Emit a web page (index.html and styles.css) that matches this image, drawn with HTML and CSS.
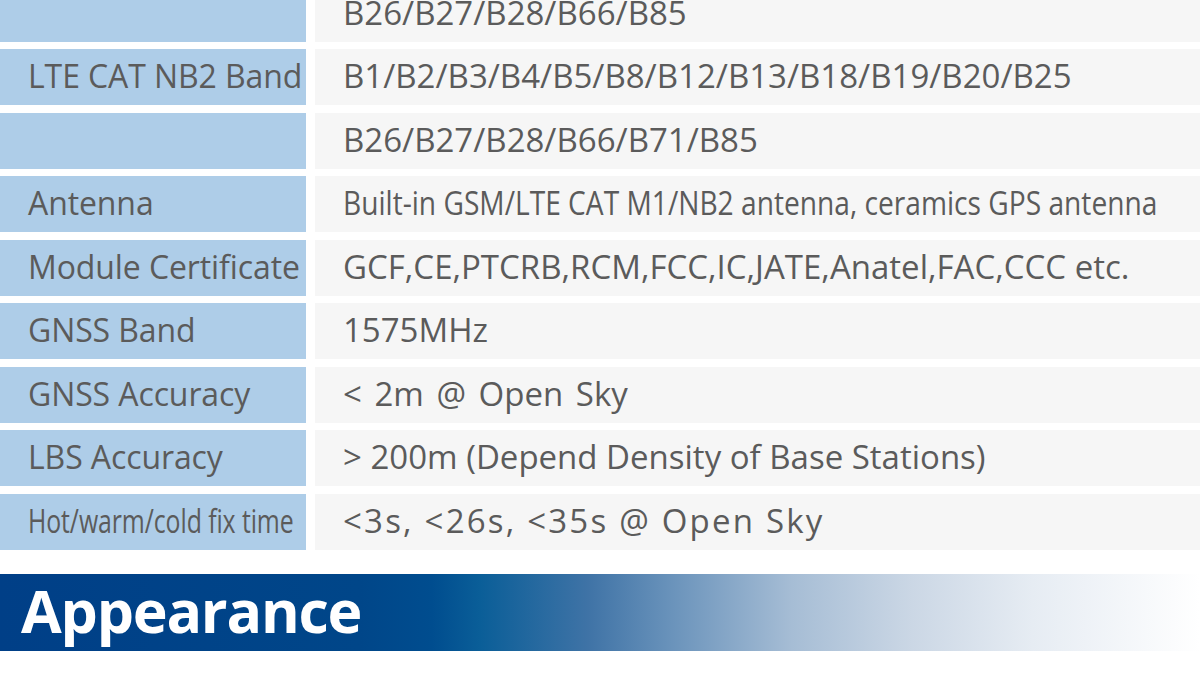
FILE: index.html
```html
<!DOCTYPE html>
<html lang="en">
<head>
<meta charset="utf-8">
<title>Specifications</title>
<link rel="stylesheet" href="styles.css">
</head>
<body>
<div class="page">
  <div class="spec">
    <div class="label"></div>
    <div class="value"><span class="txt">B26/B27/B28/B66/B85</span></div>

    <div class="label"><span class="txt">LTE CAT NB2 Band</span></div>
    <div class="value"><span class="txt">B1/B2/B3/B4/B5/B8/B12/B13/B18/B19/B20/B25</span></div>

    <div class="label"></div>
    <div class="value"><span class="txt">B26/B27/B28/B66/B71/B85</span></div>

    <div class="label"><span class="txt">Antenna</span></div>
    <div class="value"><span class="txt narrow-v">Built-in GSM/LTE CAT M1/NB2 antenna, ceramics GPS antenna</span></div>

    <div class="label"><span class="txt">Module Certificate</span></div>
    <div class="value"><span class="txt">GCF,CE,PTCRB,RCM,FCC,IC,JATE,Anatel,FAC,CCC etc.</span></div>

    <div class="label"><span class="txt">GNSS Band</span></div>
    <div class="value"><span class="txt">1575MHz</span></div>

    <div class="label"><span class="txt">GNSS Accuracy</span></div>
    <div class="value"><span class="txt wide-space">&lt; 2m @ Open Sky</span></div>

    <div class="label"><span class="txt">LBS Accuracy</span></div>
    <div class="value"><span class="txt">&gt; 200m (Depend Density of Base Stations)</span></div>

    <div class="label"><span class="txt narrow-l">Hot/warm/cold fix time</span></div>
    <div class="value"><span class="txt spaced">&lt;3s, &lt;26s, &lt;35s @ Open Sky</span></div>
  </div>

  <div class="banner">
    <h2 class="banner-title">Appearance</h2>
  </div>
</div>
</body>
</html>
```

FILE: styles.css
```css
html, body {
  margin: 0;
  padding: 0;
  background: #ffffff;
}

body {
  width: 1200px;
  height: 700px;
  overflow: hidden;
  font-family: "Open Sans", "Noto Sans", "DejaVu Sans", sans-serif;
  color: #5b5b5b;
}

.page {
  display: flex;
  flex-direction: column;
}

.spec {
  margin-top: -14.5px;
  display: grid;
  grid-template-columns: 306px 1fr;
  grid-auto-rows: 56px;
  column-gap: 9px;
  row-gap: 7.57px;
}

.label {
  background: #aecde8;
  display: flex;
  align-items: center;
  padding: 0 0 3px 28px;
  font-size: 32px;
  letter-spacing: -0.1px;
  white-space: nowrap;
  overflow: hidden;
}

.value {
  background: #f6f6f6;
  display: flex;
  align-items: center;
  padding: 0 0 3px 28px;
  font-size: 33px;
  letter-spacing: 0;
  white-space: nowrap;
  overflow: hidden;
}

.txt {
  display: inline-block;
}

.narrow-l {
  transform: scaleX(0.776);
  transform-origin: left center;
}

.narrow-v {
  transform: scaleX(0.853);
  transform-origin: left center;
}

.wide-space {
  word-spacing: 4px;
}

.spaced {
  letter-spacing: 2.2px;
}

.banner {
  margin-top: 24px;
  height: 77px;
  display: flex;
  align-items: center;
  padding-left: 21px;
  background: linear-gradient(90deg,
    #003f87 0%,
    #004689 30%,
    #004d8f 36%,
    #0a5e98 40%,
    #3f73a6 49%,
    #6a93bb 56%,
    #a6bdd5 66%,
    #cbd7e5 76%,
    #e6ecf3 86%,
    #ffffff 100%);
}

.banner-title {
  margin: 0;
  font-size: 59px;
  font-weight: 700;
  color: #ffffff;
  letter-spacing: -1.2px;
  line-height: 1;
  padding-bottom: 4px;
}
```
